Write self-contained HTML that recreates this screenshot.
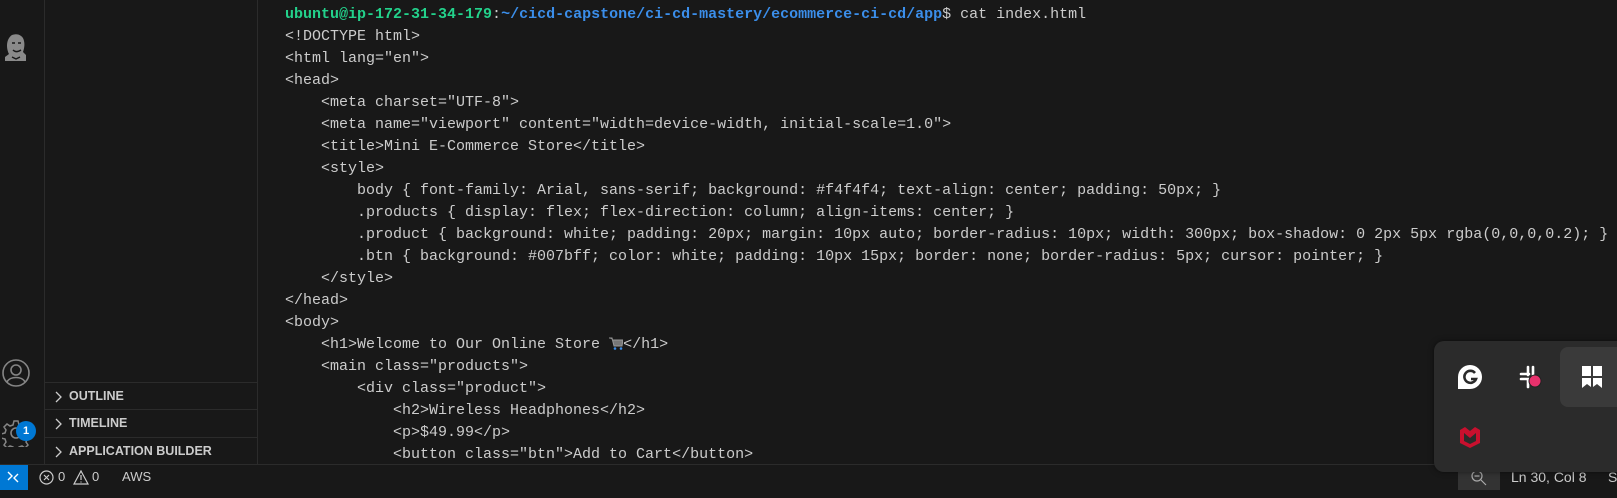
<!DOCTYPE html>
<html><head><style>
*{margin:0;padding:0;box-sizing:border-box}
body{width:1617px;height:489px;background:#181818;overflow:hidden;position:relative;font-family:"Liberation Sans",sans-serif}
#act{position:absolute;left:0;top:0;width:45px;height:464px;background:#181818;border-right:1px solid #2b2b2b}
#side{position:absolute;left:45px;top:0;width:213px;height:464px;background:#181818;border-right:1px solid #2b2b2b}
.sec{position:absolute;left:0;width:212px;height:27px;border-top:1px solid #2b2b2b;color:#cccccc;font-weight:bold;font-size:12.5px;line-height:27px;padding-left:24px}
.sec svg{position:absolute;left:8px;top:8px}
#term{position:absolute;left:285px;top:4px;font-family:"Liberation Mono",monospace;font-size:15px;line-height:22px;color:#cccccc;white-space:pre}
.g{color:#23d18b;font-weight:bold}.b{color:#3b8eea;font-weight:bold}
#status{position:absolute;left:0;top:464px;width:1617px;height:25px;background:#181818;border-top:1px solid #2b2b2b;color:#cccccc;font-size:13px;line-height:24px}
#remote{position:absolute;left:0;top:0;width:28px;height:25px;background:#0078d4}
#pop{position:absolute;left:1434px;top:341px;width:200px;height:131px;background:#2b2b2b;border-radius:10px;box-shadow:0 0 6px rgba(0,0,0,.5)}
</style></head><body>
<div id="act">
<svg style="position:absolute;left:3px;top:33px" width="27" height="29" viewBox="0 0 27 29"><path d="M9 2c5-2 11 0 12 6 1 4 0 8-1 11l3 3v6H2v-4l4-3C3 15 3 6 9 2z" fill="#8a8a8a"/><path d="M9 10h3M15 10h3M10 17c2 2 5 2 8 0M9 24l4 2 4-2" stroke="#181818" stroke-width="1.4" fill="none"/></svg>
<svg style="position:absolute;left:2px;top:359px" width="28" height="28" viewBox="0 0 28 28"><circle cx="14" cy="14" r="13" fill="none" stroke="#858585" stroke-width="1.6"/><circle cx="14" cy="11" r="5" fill="none" stroke="#858585" stroke-width="1.6"/><path d="M5 23c3-6 15-6 18 0" fill="none" stroke="#858585" stroke-width="1.6"/></svg>
<svg style="position:absolute;left:2px;top:419px" width="28" height="28" viewBox="0 0 28 28"><circle cx="14" cy="14" r="5" fill="none" stroke="#858585" stroke-width="1.6"/><path d="M12 2h4l1 4 3 1 3-2 3 3-2 3 1 3 4 1v4l-4 1-1 3 2 3-3 3-3-2-3 1-1 4h-4l-1-4-3-1-3 2-3-3 2-3-1-3-4-1v-4l4-1 1-3-2-3 3-3 3 2 3-1z" fill="none" stroke="#858585" stroke-width="1.5"/></svg>
<div style="position:absolute;left:16px;top:421px;width:20px;height:20px;border-radius:50%;background:#0078d4;color:#fff;font-size:11px;font-weight:bold;text-align:center;line-height:20px">1</div>
</div>
<div id="side">
<div class="sec" style="top:382px"><svg width="10" height="12"><path d="M3 1l5 5-5 5" stroke="#ccc" fill="none" stroke-width="1.3"/></svg>OUTLINE</div>
<div class="sec" style="top:409px"><svg width="10" height="12"><path d="M3 1l5 5-5 5" stroke="#ccc" fill="none" stroke-width="1.3"/></svg>TIMELINE</div>
<div class="sec" style="top:437px"><svg width="10" height="12"><path d="M3 1l5 5-5 5" stroke="#ccc" fill="none" stroke-width="1.3"/></svg>APPLICATION BUILDER</div>
</div>
<div id="term"><span class="g">ubuntu@ip-172-31-34-179</span>:<span class="b">~/cicd-capstone/ci-cd-mastery/ecommerce-ci-cd/app</span>$ cat index.html
&lt;!DOCTYPE html&gt;
&lt;html lang="en"&gt;
&lt;head&gt;
    &lt;meta charset="UTF-8"&gt;
    &lt;meta name="viewport" content="width=device-width, initial-scale=1.0"&gt;
    &lt;title&gt;Mini E-Commerce Store&lt;/title&gt;
    &lt;style&gt;
        body { font-family: Arial, sans-serif; background: #f4f4f4; text-align: center; padding: 50px; }
        .products { display: flex; flex-direction: column; align-items: center; }
        .product { background: white; padding: 20px; margin: 10px auto; border-radius: 10px; width: 300px; box-shadow: 0 2px 5px rgba(0,0,0,0.2); }
        .btn { background: #007bff; color: white; padding: 10px 15px; border: none; border-radius: 5px; cursor: pointer; }
    &lt;/style&gt;
&lt;/head&gt;
&lt;body&gt;
    &lt;h1&gt;Welcome to Our Online Store <svg width="14" height="14" viewBox="0 0 14 14" style="vertical-align:-2px"><path d="M0 2h3l2 8h8l1-6H4" fill="#777" stroke="#999" stroke-width="1"/><circle cx="6" cy="12.5" r="1.3" fill="#3b8eea"/><circle cx="12" cy="12.5" r="1.3" fill="#3b8eea"/></svg>&lt;/h1&gt;
    &lt;main class="products"&gt;
        &lt;div class="product"&gt;
            &lt;h2&gt;Wireless Headphones&lt;/h2&gt;
            &lt;p&gt;$49.99&lt;/p&gt;
            &lt;button class="btn"&gt;Add to Cart&lt;/button&gt;</div>
<div id="status">
<div id="remote"><svg width="28" height="25"><path d="M8 7l4 4-4 4M18 9l-4 4 4 4" stroke="#fff" stroke-width="1.4" fill="none"/></svg></div>
<svg style="position:absolute;left:39px;top:5px" width="15" height="15"><circle cx="7.5" cy="7.5" r="6.5" stroke="#ccc" fill="none" stroke-width="1.2"/><path d="M5 5l5 5M10 5l-5 5" stroke="#ccc" stroke-width="1.2"/></svg>
<span style="position:absolute;left:58px">0</span>
<svg style="position:absolute;left:73px;top:5px" width="16" height="15"><path d="M8 1l7 13H1z" stroke="#ccc" fill="none" stroke-width="1.2"/><path d="M8 5v5M8 11.5v1" stroke="#ccc" stroke-width="1.2"/></svg>
<span style="position:absolute;left:92px">0</span>
<span style="position:absolute;left:122px">AWS</span>
<div style="position:absolute;left:1458px;top:0;width:42px;height:25px;background:#333"><svg style="position:absolute;left:13px;top:5px" width="16" height="16"><circle cx="6" cy="6" r="5" stroke="#aaa" fill="none" stroke-width="1.2"/><path d="M3.5 6h5M10 10l5 5" stroke="#aaa" stroke-width="1.2"/></svg></div>
<span style="position:absolute;left:1511px;font-size:14px">Ln 30, Col 8</span>
<span style="position:absolute;left:1608px;font-size:14px">S</span>
</div>
<div id="pop">
<div style="position:absolute;left:126px;top:6px;width:80px;height:60px;background:#3a3a3a;border-radius:8px"></div>
<svg style="position:absolute;left:24px;top:24px" width="24" height="24" viewBox="0 0 24 24"><path d="M12 0a12 12 0 1 1 0 24H0V12A12 12 0 0 1 12 0z" fill="#fff"/><path d="M17 8a6 6 0 1 0 1 6h-5" stroke="#2b2b2b" stroke-width="2.6" fill="none"/></svg>
<svg style="position:absolute;left:85px;top:24px" width="24" height="24" viewBox="0 0 24 24"><g stroke="#fff" stroke-width="2.6" stroke-linecap="round"><path d="M9 2v8M14 2v8M2 9h8M2 14h8M9 14v8"/></g><circle cx="16" cy="16" r="6" fill="#e8316c" stroke="#222" stroke-width="1"/></svg>
<svg style="position:absolute;left:146px;top:24px" width="24" height="24" viewBox="0 0 24 24"><path d="M2 1h9v10H2zM13 1h9v10h-9zM2 13h9v9l-4-3-5 4zM13 13h9v10l-5-4-4 3z" fill="#fff"/></svg>
<svg style="position:absolute;left:25px;top:85px" width="22" height="22" viewBox="0 0 22 22"><path d="M1 4l5-3 5 4 5-4 5 3v13l-10 5-10-5z" fill="#c8102e"/><path d="M5 7l6 5 6-5v8l-6 3-6-3z" fill="#2b2b2b"/></svg>
</div>
</body></html>
